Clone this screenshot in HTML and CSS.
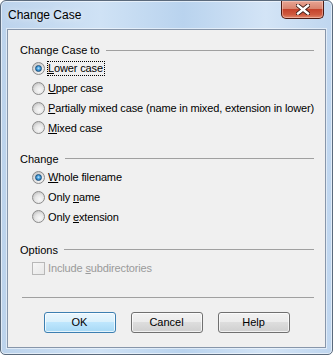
FILE: index.html
```html
<!DOCTYPE html>
<html lang="en">
<head>
    <meta charset="UTF-8">
    <title>Change Case</title>
    <link rel="stylesheet" href="styles.css">
</head>
<body>
    <div class="window">
        <div class="titlebar">
            <span class="title">Change Case</span>
            <div class="close-btn">
                <svg width="14" height="11" viewBox="0 0 14 11">
                    <path d="M2 1.5 L12 9.5 M12 1.5 L2 9.5" stroke="#3a1a14" stroke-width="4.2" stroke-linecap="square"/>
                    <path d="M2 1.5 L12 9.5 M12 1.5 L2 9.5" stroke="#ffffff" stroke-width="2.4" stroke-linecap="square"/>
                </svg>
            </div>
        </div>

        <div class="client">
            <div class="group-head"><span>Change Case to</span><i class="rule"></i></div>
            <div class="option"><span class="radio checked"></span><span class="label focus"><u>L</u>ower case</span></div>
            <div class="option"><span class="radio"></span><span class="label"><u>U</u>pper case</span></div>
            <div class="option"><span class="radio"></span><span class="label"><u>P</u>artially mixed case (name in mixed, extension in lower)</span></div>
            <div class="option"><span class="radio"></span><span class="label"><u>M</u>ixed case</span></div>

            <div class="group-head second"><span>Change</span><i class="rule"></i></div>
            <div class="option"><span class="radio checked"></span><span class="label"><u>W</u>hole filename</span></div>
            <div class="option"><span class="radio"></span><span class="label">Only <u>n</u>ame</span></div>
            <div class="option"><span class="radio"></span><span class="label">Only <u>e</u>xtension</span></div>

            <div class="group-head third"><span>Options</span><i class="rule"></i></div>
            <div class="option disabled"><span class="checkbox"></span><span class="label">Include <u>s</u>ubdirectories</span></div>

            <div class="separator"></div>

            <div class="buttons">
                <button class="btn default">OK</button>
                <button class="btn">Cancel</button>
                <button class="btn">Help</button>
            </div>
        </div>
    </div>
</body>
</html>
```

FILE: styles.css
```css
html, body {
    margin: 0;
    padding: 0;
    background: #ffffff;
}
body {
    font-family: "Liberation Sans", Arial, sans-serif;
    font-size: 11px;
    color: #000;
}
.window {
    width: 333px;
    height: 355px;
    box-sizing: border-box;
    border: 1px solid #5b6a7c;
    border-radius: 6px 6px 5px 5px;
    background: linear-gradient(90deg, #bcd3ec 0%, #cfe2f5 30%, #b9d3ee 55%, #d3e4f6 80%, #bfd6ef 100%);
    box-shadow: inset 0 0 0 1px rgba(255,255,255,0.55);
    padding: 0 6px 6px 6px;
}
.titlebar {
    height: 28px;
    display: flex;
    justify-content: space-between;
    align-items: flex-start;
}
.title {
    margin-top: 7px;
    padding-left: 1px;
    font-size: 12px;
    line-height: 15px;
    text-shadow: 0 0 6px rgba(255,255,255,0.9);
}
.close-btn {
    width: 43px;
    height: 18px;
    margin-right: 2px;
    box-sizing: border-box;
    border: 1px solid #4d1a12;
    border-top: none;
    border-radius: 0 0 5px 5px;
    background: linear-gradient(180deg, #e8a493 0%, #d9846f 45%, #c5432c 50%, #cf5a3f 80%, #e0886c 100%);
    box-shadow: inset 0 0 0 1px rgba(255,220,210,0.45);
    display: flex;
    align-items: center;
    justify-content: center;
}
.client {
    height: 319px;
    box-sizing: border-box;
    background: #f0f0f0;
    border: 1px solid #8796aa;
    box-shadow: 0 0 0 1px rgba(255,255,255,0.5);
    padding: 13px 11px 0 12px;
}
.group-head {
    display: flex;
    align-items: center;
    height: 14px;
    line-height: 14px;
}
.group-head.second {
    margin-top: 14px;
}
.group-head.third {
    margin-top: 16px;
}
.rule {
    flex: 1;
    margin-left: 6px;
    border-top: 1px solid #a0a0a0;
    height: 0;
}
.option {
    display: flex;
    align-items: center;
    height: 19.67px;
    padding-left: 12px;
}
.group-head + .option {
    margin-top: 2px;
}
.label {
    margin-left: 3px;
    line-height: 14px;
    letter-spacing: -0.14px;
    white-space: nowrap;
}
.label.focus {
    display: inline-block;
    height: 13px;
    line-height: 13px;
    outline: 1px dotted #000;
    padding-right: 1px;
}
.radio {
    flex-shrink: 0;
    width: 13px;
    height: 13px;
    box-sizing: border-box;
    border-radius: 50%;
    border: 1px solid #8b8b8b;
    background: radial-gradient(circle at 60% 65%, #f8f8f8 0%, #e6e6e6 45%, #c9c9c9 75%, #d6d6d6 100%);
    display: flex;
    align-items: center;
    justify-content: center;
}
.radio.checked::after {
    content: "";
    width: 7px;
    height: 7px;
    box-sizing: border-box;
    border-radius: 50%;
    border: 1px solid #1b4f7c;
    background: radial-gradient(circle at 50% 45%, #bfe6ff 0%, #4aa3e0 40%, #13629d 100%);
}
.checkbox {
    flex-shrink: 0;
    width: 13px;
    height: 13px;
    box-sizing: border-box;
    border: 1px solid #b8b8b8;
    background: linear-gradient(135deg, #f6f6f6 0%, #e8e8e8 100%);
}
.option.disabled .label {
    color: #9a9a9a;
}
.separator {
    margin: 18.5px 0 0 2px;
    border-top: 1px solid #a0a0a0;
}
.buttons {
    display: flex;
    justify-content: center;
    gap: 15px;
    margin-top: 14px;
    margin-left: -12px;
    margin-right: -11px;
}
.btn {
    width: 72px;
    height: 21px;
    padding: 0;
    font-family: "Liberation Sans", Arial, sans-serif;
    font-size: 11px;
    color: #000;
    border: 1px solid #707070;
    border-radius: 3px;
    background: linear-gradient(180deg, #f2f2f2 0%, #ebebeb 49%, #dddddd 50%, #cfcfcf 100%);
    box-shadow: inset 0 0 0 1px rgba(255,255,255,0.7);
}
.btn.default {
    border-color: #3c7fb1;
    background: linear-gradient(180deg, #eaf6fd 0%, #d9f0fc 49%, #bee6fd 50%, #a7d9f5 100%);
}
```
